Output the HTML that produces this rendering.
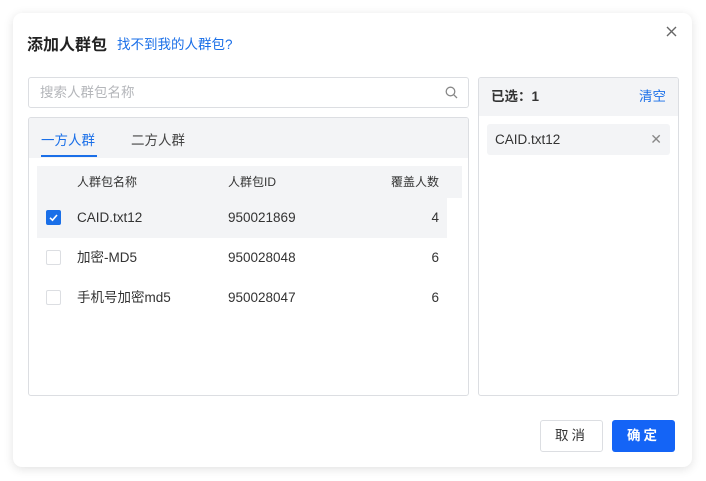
<!DOCTYPE html>
<html><head><meta charset="utf-8"><style>
*{box-sizing:border-box;margin:0;padding:0}
body{width:706px;height:481px;background:#fff;font-family:"Liberation Sans","Noto Sans CJK SC",sans-serif;position:relative;overflow:hidden;color:#333}
.dlg{position:absolute;left:13px;top:13px;width:679px;height:454px;background:#fff;border-radius:9px;box-shadow:0 2px 10px rgba(0,0,0,.12)}
.a{position:absolute}
.t{left:27px;top:31px;font-size:16px;font-weight:bold;color:#222}
.lk{left:117px;top:33px;font-size:13.5px;color:#1a6fe8}
.search{left:28px;top:77px;width:441px;height:31px;border:1px solid #dcdee2;border-radius:3px;padding-left:11px;line-height:29px;font-size:13.5px;color:#b4b6ba}
.lp{left:28px;top:117px;width:441px;height:279px;border:1px solid #dcdee2;border-radius:3px;overflow:hidden}
.tabs{position:absolute;left:0;top:0;width:100%;height:40px;background:#f3f4f6}
.rp{left:478px;top:77px;width:201px;height:319px;border:1px solid #dcdee2;border-radius:3px;overflow:hidden}
.cb{position:absolute;width:15px;height:15px;border:1px solid #dcdee2;border-radius:2px;background:#fff}
.row{position:absolute;left:8px;width:410px;height:40px;font-size:13.5px;line-height:40px}
.row span{position:absolute}
.btn{position:absolute;top:420px;width:63px;height:32px;border-radius:3px;font-size:13.5px;text-align:center;line-height:30px;letter-spacing:3px}
</style></head><body>
<div class="dlg"></div>
<div class="a t">添加人群包</div>
<div class="a lk">找不到我的人群包?</div>
<svg class="a" style="left:666px;top:26px" width="11" height="11" viewBox="0 0 11 11"><path d="M1 1L10 10M10 1L1 10" stroke="#666" stroke-width="1.4"/></svg>
<div class="a search">搜索人群包名称
<svg style="position:absolute;right:10px;top:8px" width="13" height="13" viewBox="0 0 13 13"><circle cx="5.5" cy="5.5" r="4.3" fill="none" stroke="#888" stroke-width="1.3"/><path d="M8.7 8.7L12 12" stroke="#888" stroke-width="1.3"/></svg></div>
<div class="a lp">
 <div class="tabs">
  <div class="a" style="left:12px;top:11px;font-size:13.5px;color:#1a6fe8">一方人群</div>
  <div class="a" style="left:102px;top:11px;font-size:13.5px;color:#444">二方人群</div>
  <div class="a" style="left:12px;top:37px;width:56px;height:2px;background:#1a6fe8"></div>
 </div>
 <div class="a" style="left:8px;top:48px;width:425px;height:32px;background:#f3f4f6;font-size:12px;line-height:32px;color:#333">
  <span class="a" style="left:40px">人群包名称</span><span class="a" style="left:191px">人群包ID</span><span class="a" style="right:23px">覆盖人数</span></div>
 <div class="row" style="top:80px;background:#f3f4f6"><div class="cb" style="left:9px;top:12px;background:#1a6fe8;border-color:#1a6fe8"><svg width="13" height="13" viewBox="0 0 13 13" style="position:absolute;left:0;top:0"><path d="M3 6.8L5.5 9.2 10 4" fill="none" stroke="#fff" stroke-width="1.6"/></svg></div><span style="left:40px">CAID.txt12</span><span style="left:191px">950021869</span><span style="right:8px">4</span></div>
 <div class="row" style="top:120px"><div class="cb" style="left:9px;top:12px"></div><span style="left:40px">加密-MD5</span><span style="left:191px">950028048</span><span style="right:8px">6</span></div>
 <div class="row" style="top:160px"><div class="cb" style="left:9px;top:12px"></div><span style="left:40px">手机号加密md5</span><span style="left:191px">950028047</span><span style="right:8px">6</span></div>
</div>
<div class="a rp">
 <div class="a" style="left:0;top:0;width:100%;height:38px;background:#f3f4f6;font-size:13.5px;line-height:38px">
  <span class="a" style="left:12px;font-weight:600;color:#333">已选：1</span><span class="a" style="right:12px;color:#1a6fe8">清空</span></div>
 <div class="a" style="left:8px;top:46px;width:183px;height:31px;background:#f3f4f6;border-radius:3px;font-size:13.5px;line-height:31px;padding-left:8px;color:#333">CAID.txt12<span class="a" style="right:8px;color:#888;font-size:14px">✕</span></div>
</div>
<div class="btn" style="left:540px;border:1px solid #dcdee2;color:#333;background:#fff">取消</div>
<div class="btn" style="left:612px;background:#1464f6;color:#fff;line-height:32px;font-weight:bold">确定</div>
</body></html>
